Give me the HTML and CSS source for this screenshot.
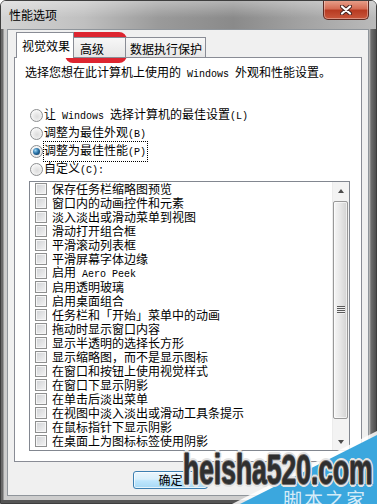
FILE: index.html
```html
<!DOCTYPE html>
<html lang="zh-CN">
<head>
  <meta charset="UTF-8">
  <title>性能选项</title>
  <link rel="stylesheet" href="styles.css">
</head>
<body>
<div class="window">
  <div class="titlebar">
    <span class="title">性能选项</span>
    <div class="close">
      <svg width="12" height="10" viewBox="0 0 12 10">
        <path d="M2 1.5 L10 8.5 M10 1.5 L2 8.5" stroke="#4a2622" stroke-width="4.2" stroke-linecap="round"/>
        <path d="M2 1.5 L10 8.5 M10 1.5 L2 8.5" stroke="#fff" stroke-width="2.2" stroke-linecap="round"/>
      </svg>
    </div>
  </div>
  <div class="frame">
    <div class="client">
      <div class="tabs">
        <div class="tab tab-active">视觉效果</div>
        <div class="tab tab-adv">高级</div>
        <div class="tab tab-dep">数据执行保护</div>
      </div>
      <div class="panel">
        <p class="intro">选择您想在此计算机上使用的<span class="en"> Windows </span>外观和性能设置。</p>
        <div class="options">
          <div class="radio-row"><span class="radio"></span><span>让<span class="en"> Windows </span>选择计算机的最佳设置<span class="en">(L)</span></span></div>
          <div class="radio-row"><span class="radio"></span><span>调整为最佳外观<span class="en">(B)</span></span></div>
          <div class="radio-row"><span class="radio radio-on"></span><span class="focus">调整为最佳性能<span class="en">(P)</span></span></div>
          <div class="radio-row"><span class="radio"></span><span>自定义<span class="en">(C):</span></span></div>
        </div>
        <div class="listbox">
          <ul class="items">
            <li><span class="check"></span><span>保存任务栏缩略图预览</span></li>
            <li><span class="check"></span><span>窗口内的动画控件和元素</span></li>
            <li><span class="check"></span><span>淡入淡出或滑动菜单到视图</span></li>
            <li><span class="check"></span><span>滑动打开组合框</span></li>
            <li><span class="check"></span><span>平滑滚动列表框</span></li>
            <li><span class="check"></span><span>平滑屏幕字体边缘</span></li>
            <li><span class="check"></span><span>启用<span class="en"> Aero Peek</span></span></li>
            <li><span class="check"></span><span>启用透明玻璃</span></li>
            <li><span class="check"></span><span>启用桌面组合</span></li>
            <li><span class="check"></span><span>任务栏和「开始」菜单中的动画</span></li>
            <li><span class="check"></span><span>拖动时显示窗口内容</span></li>
            <li><span class="check"></span><span>显示半透明的选择长方形</span></li>
            <li><span class="check"></span><span>显示缩略图，而不是显示图标</span></li>
            <li><span class="check"></span><span>在窗口和按钮上使用视觉样式</span></li>
            <li><span class="check"></span><span>在窗口下显示阴影</span></li>
            <li><span class="check"></span><span>在单击后淡出菜单</span></li>
            <li><span class="check"></span><span>在视图中淡入淡出或滑动工具条提示</span></li>
            <li><span class="check"></span><span>在鼠标指针下显示阴影</span></li>
            <li><span class="check"></span><span>在桌面上为图标标签使用阴影</span></li>
          </ul>
          <div class="scrollbar">
            <div class="sb-btn"><span class="arrow-up"></span></div>
            <div class="thumb"><span class="grip"></span></div>
            <div class="sb-track"></div>
            <div class="sb-btn"><span class="arrow-down"></span></div>
          </div>
        </div>
      </div>
      <div class="buttons">
        <button class="btn btn-default">确定</button>
      </div>
    </div>
  </div>
</div>

<div class="highlight"></div>
<div class="wm-edge"></div>
<div class="wm-tri"></div>
<div class="wm-text">heisha520.com</div>
<div class="wm-cn">脚本之家</div>
</body>
</html>
```
FILE: styles.css
```css
body {
  margin: 0;
  width: 377px;
  height: 504px;
  overflow: hidden;
  position: relative;
  font-family: "Noto Sans CJK SC", "Noto Sans", sans-serif;
  font-size: 12px;
  color: #000;
  background: #fff;
}
.en {
  font-family: "Liberation Mono", monospace;
  font-size: 10px;
  white-space: pre;
}
.window {
  width: 377px;
  height: 504px;
  box-sizing: border-box;
  border: 1px solid #3e3e3e;
  border-radius: 6px 6px 0 0;
  display: flex;
  flex-direction: column;
  overflow: hidden;
}
.titlebar {
  height: 28px;
  flex-shrink: 0;
  display: flex;
  align-items: center;
  justify-content: space-between;
  padding-left: 8px;
  background:
    linear-gradient(rgba(255,255,255,0.35), rgba(255,255,255,0) 60%),
    linear-gradient(to right, #d4d4d4 0%, #c0c0c0 22%, #9a9a9a 42%, #8a8a8a 62%, #a2a2a2 80%, #bababa 100%);
}
.title {
  line-height: 14px;
}
.close {
  align-self: flex-start;
  margin-top: -1px;
  margin-right: 7px;
  width: 46px;
  height: 20px;
  box-sizing: border-box;
  border: 1px solid #5e2a22;
  border-top: none;
  border-radius: 0 0 5px 5px;
  background: linear-gradient(#e9a48f 0%, #d66d55 45%, #b83b22 55%, #c9573c 100%);
  box-shadow: inset 0 0 0 1px rgba(255,255,255,0.35);
  display: flex;
  align-items: center;
  justify-content: center;
}
.frame {
  flex: 1;
  display: flex;
  padding: 0 7px 7px 6px;
  background: linear-gradient(to right, #6a6a6a 0, #6a6a6a 2px, #cdcdcd 3px, #cdcdcd 368px, #6e6e6e 370px, #4e4e4e 100%);
  box-shadow: inset 0 -3px 0 #555;
}
.client {
  flex: 1;
  border: 1px solid #8f959b;
  background: #f0f0f0;
  padding: 2px 6px 0 6px;
  display: flex;
  flex-direction: column;
}
.tabs {
  height: 26px;
  margin-bottom: -1px;
  padding-left: 2px;
  display: flex;
  align-items: flex-end;
  position: relative;
  z-index: 1;
}
.tab {
  box-sizing: border-box;
  height: 21px;
  line-height: 14px;
  border: 1px solid #898c95;
  background: linear-gradient(#f7f7f7, #e6e6e6);
  white-space: nowrap;
}
.tab-active {
  width: 58px;
  height: 26px;
  padding: 6px 0 0 5px;
  background: #fff;
  border-bottom: none;
}
.tab-adv {
  width: 52px;
  padding: 4px 0 0 6px;
  border-left: none;
}
.tab-dep {
  width: 81px;
  padding: 4px 0 0 4px;
  margin-left: -1px;
}
.panel {
  height: 405px;
  box-sizing: border-box;
  border: 1px solid #898c95;
  background: #fff;
  padding: 7px 0 0 10px;
}
.intro {
  margin: 0;
  line-height: 14px;
}
.options {
  margin-top: 24px;
}
.radio-row {
  height: 18px;
  display: flex;
  align-items: center;
  line-height: 14px;
}
.radio {
  width: 13px;
  height: 13px;
  box-sizing: border-box;
  margin: 0 1px 0 5px;
  border-radius: 50%;
  border: 1px solid #8c8e90;
  background: radial-gradient(circle at 55% 60%, #dcdcdc 0, #eeeeee 45%, #fafafa 75%);
  display: flex;
  align-items: center;
  justify-content: center;
}
.radio-on::after {
  content: "";
  width: 7px;
  height: 7px;
  border-radius: 50%;
  background: radial-gradient(circle at 35% 35%, #9fd8f6 0, #2a73a8 45%, #0d2c4a 100%);
}
.focus {
  outline: 1px dotted #000;
  padding: 1px 1px 1px 0;
}
.listbox {
  margin: 3px 0 0 4px;
  width: 321px;
  height: 270px;
  box-sizing: border-box;
  border: 1px solid #828790;
  display: flex;
}
.items {
  flex: 1;
  margin: 0;
  padding: 0;
  list-style: none;
}
.items li {
  height: 14px;
  line-height: 14px;
  display: flex;
  align-items: center;
  white-space: nowrap;
}
.check {
  flex-shrink: 0;
  width: 12px;
  height: 12px;
  box-sizing: border-box;
  margin: 0 5px 0 5px;
  border: 1px solid #8e8f8f;
  background: linear-gradient(135deg, #cfd1d4, #f4f4f4);
  box-shadow: inset 0 0 0 1px #f6f6f6;
}
.scrollbar {
  width: 17px;
  background: #f3f3f3;
  border-left: 1px solid #ececec;
  box-sizing: border-box;
  display: flex;
  flex-direction: column;
}
.sb-btn {
  height: 17px;
  display: flex;
  align-items: center;
  justify-content: center;
}
.arrow-up {
  border-left: 3px solid transparent;
  border-right: 3px solid transparent;
  border-bottom: 4px solid #4c4c4c;
}
.arrow-down {
  border-left: 3px solid transparent;
  border-right: 3px solid transparent;
  border-top: 4px solid #4c4c4c;
}
.thumb {
  margin: 2px 1px 0 0;
  height: 218px;
  box-sizing: border-box;
  border: 1px solid #999;
  border-radius: 2px;
  background: linear-gradient(to right, #f6f6f6, #e6e6e6 50%, #d2d2d2);
  box-shadow: inset 0 0 0 1px rgba(255,255,255,0.6);
  display: flex;
  align-items: center;
  justify-content: center;
}
.grip {
  width: 8px;
  height: 8px;
  background: repeating-linear-gradient(#5a5a5a 0, #5a5a5a 1px, #f0f0f0 1px, #f0f0f0 2px);
}
.sb-track {
  flex: 1;
}
.buttons {
  display: flex;
  padding: 9px 0 0 119px;
}
.btn {
  width: 75px;
  height: 18px;
  padding: 0;
  font-family: inherit;
  font-size: 12px;
  line-height: 14px;
  color: #000;
  border: 1px solid #3c7fb1;
  border-radius: 3px;
  background: linear-gradient(#eaf6fd 0%, #d9f0fc 45%, #bee6fd 55%, #a7d9f5 100%);
  box-shadow: inset 0 0 0 1px rgba(255,255,255,0.7);
}
.highlight {
  position: absolute;
  left: 65px;
  top: 32px;
  width: 62px;
  height: 31px;
  box-sizing: border-box;
  border: 5px solid #dd2530;
  border-radius: 8px;
}
.wm-edge {
  position: absolute;
  left: 232px;
  top: 431px;
  width: 145px;
  height: 73px;
  background: rgba(255,255,255,0.85);
  clip-path: polygon(100% 0, 100% 100%, 0 100%);
}
.wm-tri {
  position: absolute;
  left: 240px;
  top: 435px;
  width: 137px;
  height: 69px;
  background: #3ba7de;
  clip-path: polygon(100% 0, 100% 100%, 0 100%);
}
.wm-text {
  position: absolute;
  left: 183px;
  top: 448px;
  font-family: "Liberation Sans", sans-serif;
  font-weight: bold;
  font-size: 43px;
  line-height: 42px;
  color: #2f2f2f;
  white-space: nowrap;
  transform: scaleX(0.615);
  transform-origin: 0 0;
  text-shadow:
    1px 0 #707070, -1px 0 #707070, 0 1px #707070, 0 -1px #707070,
    3px 0 #e4e4e4, -3px 0 #e4e4e4, 0 3px #e4e4e4, 0 -3px #e4e4e4,
    2px 2px #e4e4e4, -2px -2px #e4e4e4, 2px -2px #e4e4e4, -2px 2px #e4e4e4;
}
.wm-cn {
  position: absolute;
  left: 283px;
  top: 488px;
  font-size: 19px;
  line-height: 22px;
  letter-spacing: 2px;
  color: rgba(255,255,255,0.8);
  white-space: nowrap;
}
```
